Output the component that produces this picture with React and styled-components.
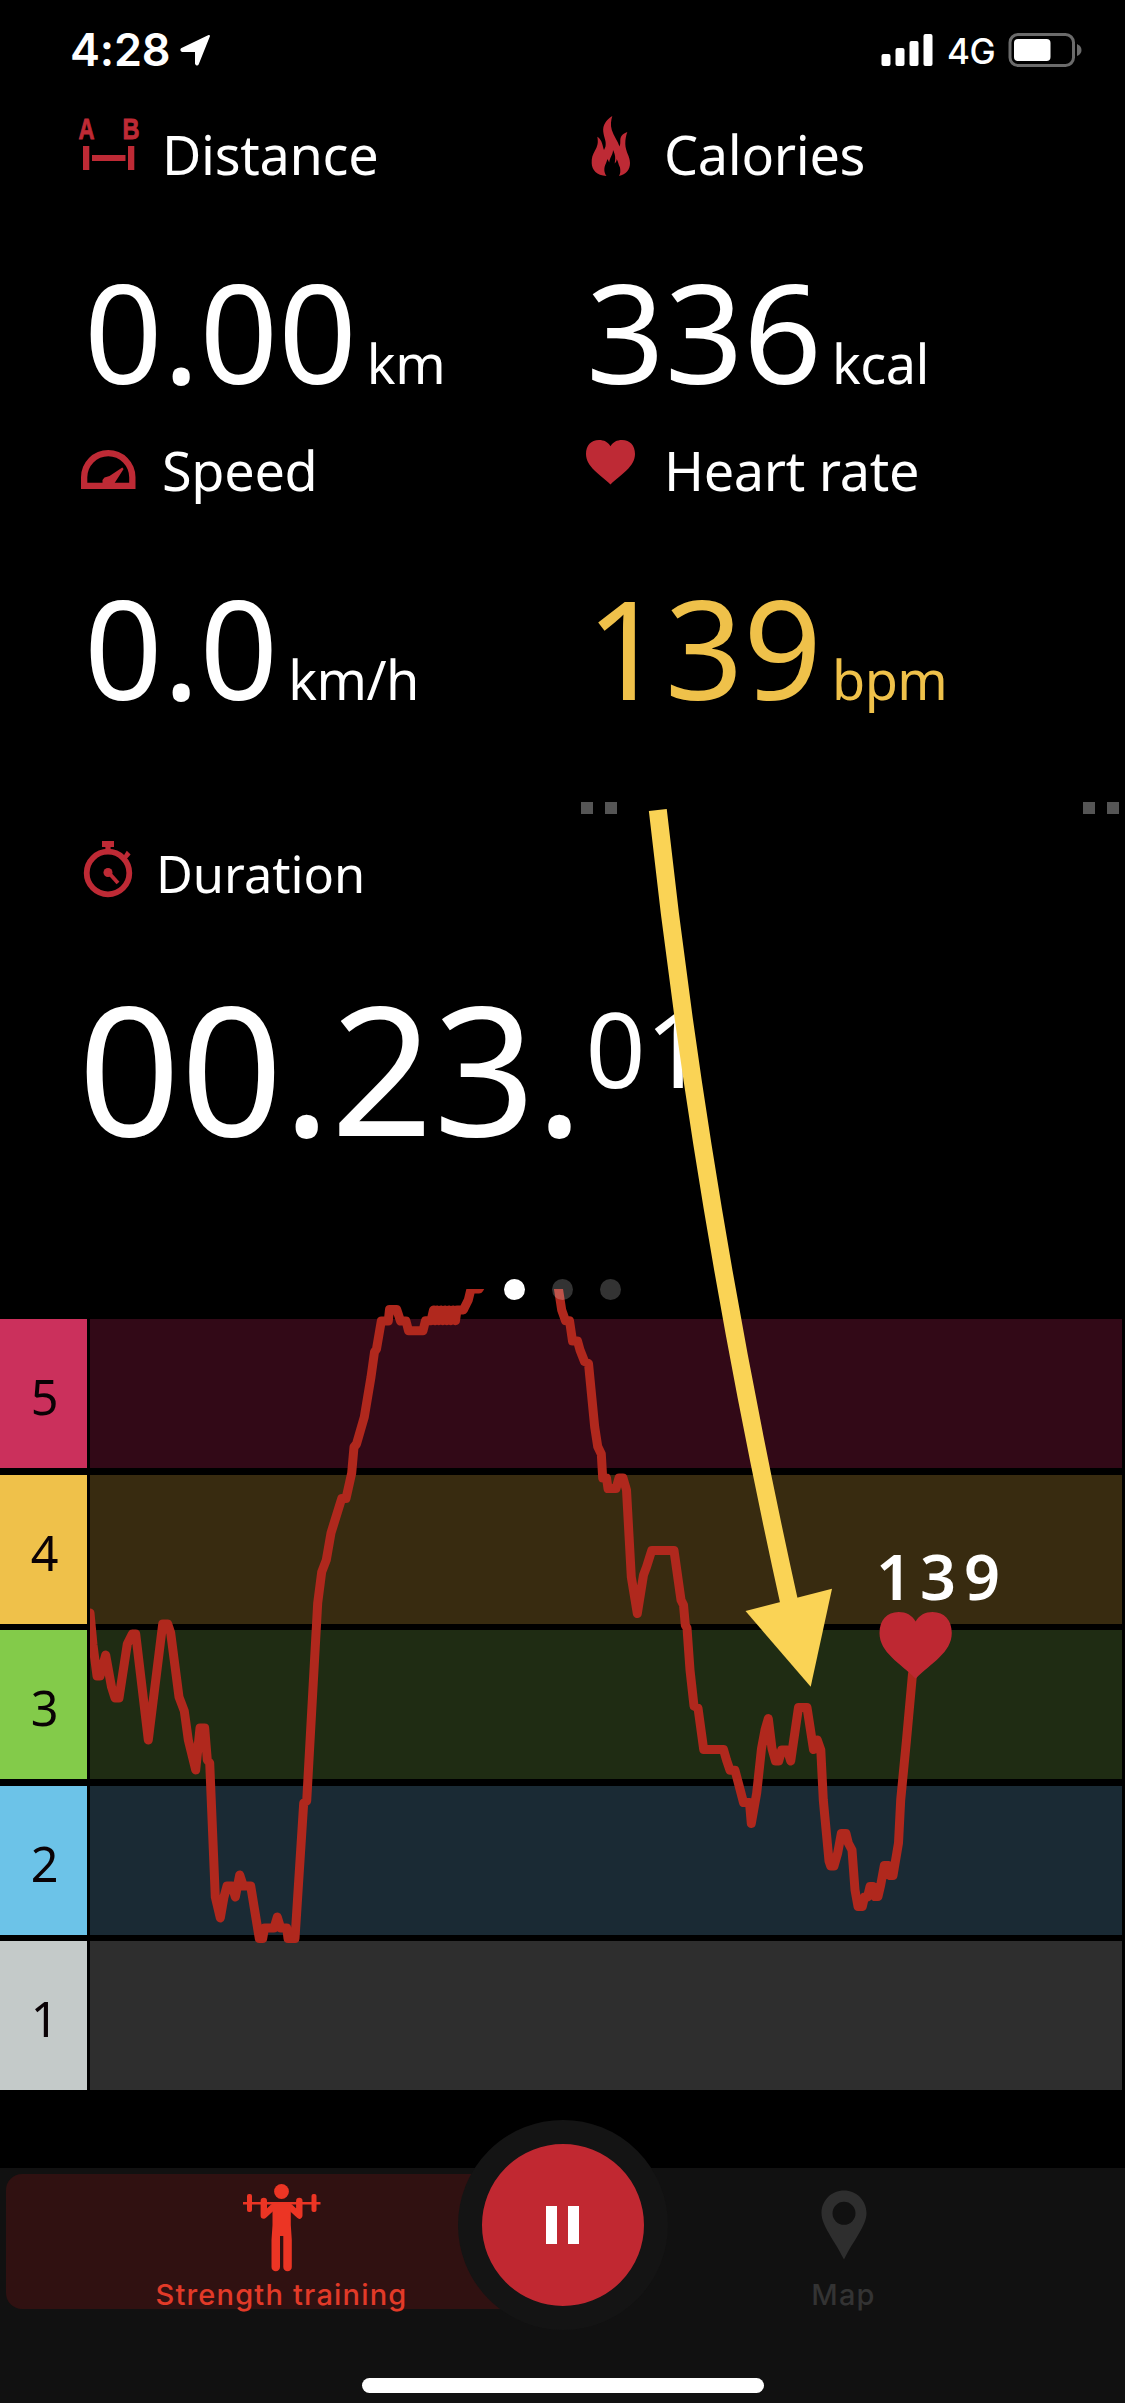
import React from "react";
import styled, { createGlobalStyle } from "styled-components";

const GlobalStyle = createGlobalStyle`
  * {
    box-sizing: border-box;
  }
  body {
    margin: 0;
    background: #000;
  }
`;

const Screen = styled.div`
  position: relative;
  display: flex;
  flex-direction: column;
  width: 1125px;
  height: 2403px;
  overflow: hidden;
  background: #000;
  color: #fff;
  font-family: "Noto Sans", "Open Sans", sans-serif;
`;

const StatusBar = styled.header`
  display: flex;
  justify-content: space-between;
  height: 100px;
  padding: 27px 43px 0 70px;
  font-family: Inter, "Liberation Sans", sans-serif;
`;

const StatusGroup = styled.div`
  display: flex;
  align-items: flex-start;
`;

const Clock = styled.span`
  width: 110px;
  font-size: 45px;
  line-height: 45px;
  font-weight: 600;
  letter-spacing: -0.2px;
`;

const Network = styled.span`
  width: 74px;
  padding: 7px 0 0 14px;
  font-size: 35px;
  line-height: 35px;
  font-weight: 450;
  letter-spacing: -0.5px;
`;

const MetricGrid = styled.section`
  display: grid;
  grid-template-columns: 502px 1fr;
  grid-auto-rows: 316px;
  padding-left: 78px;
`;

const Metric = styled.div`
  padding-top: 16px;
`;

const MetricHead = styled.div`
  display: flex;
  gap: ${({ $gap }) => $gap || 24}px;
  height: 64px;
`;

const IconBox = styled.svg`
  width: 60px;
  height: 64px;
  overflow: visible;
  fill: #be2a35;
`;

const MetricLabel = styled.span`
  padding-top: 11px;
  font-size: ${({ $size }) => $size || 54}px;
  line-height: 1;
  letter-spacing: ${({ $size }) => ($size ? 0 : -0.3)}px;
  white-space: nowrap;
`;

const MetricValue = styled.div`
  display: flex;
  align-items: baseline;
  gap: 10px;
  margin: 82px 0 0 6px;
  font-size: 137.5px;
  line-height: 138px;
  color: ${({ $color }) => $color || "#fff"};
`;

const Unit = styled.span`
  font-size: 54px;
  line-height: 54px;
  letter-spacing: -0.5px;
`;

const Handles = styled.div`
  display: flex;
  justify-content: space-between;
  height: 12px;
  margin: 70px 6px 0 581px;
`;

const HandlePair = styled.div`
  display: flex;
  gap: 12px;
`;

const Handle = styled.span`
  width: 12px;
  height: 12px;
  background: #555;
`;

const Duration = styled.section`
  height: 465px;
  padding: 24px 0 0 78px;
`;

const DurationValue = styled.div`
  display: flex;
  align-items: flex-start;
  margin-top: 75px;
  font-size: 179px;
  line-height: 179px;
`;

const Seconds = styled.span`
  padding: 18px 0 0 2px;
  font-size: 105px;
  line-height: 105px;
`;

const Pager = styled.div`
  position: relative;
  z-index: 1;
  display: flex;
  justify-content: center;
  gap: 27px;
  height: 40px;
`;

const Dot = styled.span`
  width: 21px;
  height: 21px;
  border-radius: 50%;
  background: ${({ $active }) => ($active ? "#fff" : "rgba(255, 255, 255, 0.2)")};
`;

const Chart = styled.section`
  position: relative;
  display: grid;
  grid-template-rows: repeat(4, 155.5px) 149px;
  height: 771px;
`;

const Zone = styled.div`
  display: grid;
  grid-template-columns: 87px 1032px;
  column-gap: 3px;
  height: 149.3px;
`;

const ZoneLabel = styled.span`
  display: flex;
  align-items: center;
  justify-content: center;
  padding: 6px 0 0 2px;
  background: ${({ $color }) => $color};
  color: #0a0205;
  font-size: 48.5px;
  line-height: 1;
`;

const ZoneBand = styled.span`
  background: ${({ $color }) => $color};
`;

const Trace = styled.svg`
  position: absolute;
  left: 90px;
  bottom: 0;
`;

const Reading = styled.span`
  position: absolute;
  left: 876px;
  top: 225px;
  font-size: 63px;
  line-height: 63px;
  font-weight: 570;
  letter-spacing: 8px;
`;

const TabBar = styled.nav`
  position: relative;
  display: grid;
  grid-template-columns: 551px 1fr;
  column-gap: 5px;
  align-items: start;
  height: 235px;
  margin-top: 78px;
  padding: 6px 0 0 6px;
  background: #111;
  font-family: Inter, "Liberation Sans", sans-serif;
`;

const Tab = styled.div`
  display: flex;
  flex-direction: column;
  align-items: center;
  height: 135px;
  padding-top: 8px;
  border-radius: 16px;
  background: ${({ $active }) => ($active ? "#301111" : "transparent")};
  color: ${({ $active }) => ($active ? "#e23a28" : "#333")};

  svg {
    flex-shrink: 0;
  }
`;

const TabLabel = styled.span`
  margin-top: 4px;
  font-size: 29px;
  line-height: 36px;
  font-weight: 450;
  letter-spacing: 1.2px;
`;

const PauseButton = styled.button`
  position: absolute;
  top: -48px;
  left: 457.5px;
  display: flex;
  align-items: center;
  justify-content: center;
  gap: 11px;
  width: 210px;
  height: 210px;
  padding: 0;
  border: 24px solid #141414;
  border-radius: 50%;
  background: #c12831;
`;

const PauseBar = styled.span`
  width: 11px;
  height: 38px;
  background: #fff;
`;

const HomeIndicator = styled.span`
  position: absolute;
  bottom: 10px;
  left: 362px;
  width: 402px;
  height: 15px;
  border-radius: 8px;
  background: #fff;
`;

const Callout = styled.svg`
  position: absolute;
  top: 0;
  left: 0;
  z-index: 2;
  pointer-events: none;
`;

const RED = "#be2a35";
const HEART = "M24.5 6.3C22 2 18 0 13 0C5 0 0 5.5 0 14C0 27 14 34 24.5 44.5C35 34 49 27 49 14C49 5.5 44 0 36 0C31 0 27 2 24.5 6.3Z";

const DistanceIcon = () => (
  <IconBox>
    <g
      fontFamily="Liberation Sans, sans-serif"
      fontWeight="700"
      fontSize="30"
      stroke={RED}
      strokeWidth="0.9"
    >
      <text x="0.5" y="23" textLength="16" lengthAdjust="spacingAndGlyphs">A</text>
      <text x="44.5" y="23" textLength="17" lengthAdjust="spacingAndGlyphs">B</text>
    </g>
    <path d="M5 30h6.3v24H5zM50 30h6.3v24h-6.3zM14 39h33.5v6H14z" />
  </IconBox>
);

const FlameIcon = () => (
  <IconBox>
    <path d="M32.3 0C26 4 22.5 9 23.3 16C24 22 26.500 25 25.500 30.500L24 34C22.500 30 22.500 24 17.300 20.700C18.500 27 17.500 30 15 34.500C12.500 39 11.500 42 11.700 47.300C12 54 16.500 59.500 26.500 60C24 57 23.500 52 26 47.300L27.500 43L29.200 46.500C29.800 41 33 39 33 34C35.500 39 35.600 42 34.700 47.500C36 46 36.700 45 36.700 43C38.500 46 38.200 48.500 40 51.500C40.500 55 40.500 57.500 39 60C46 58.500 50 54 50 47C50 40 45.500 36 45.300 28C45.300 23 46 20 47.300 16C42.500 17.500 40.500 20.500 40.300 24C40.200 27 40.500 28 39.500 30.500C38 25 33.500 20 31.800 14C30.300 9 31 4 32.300 0Z" />
  </IconBox>
);

const SpeedIcon = () => (
  <IconBox>
    <path
      fillRule="evenodd"
      d="M3 57V45.2A27.25 27.25 0 0 1 57.5 45.2V57ZM9.3 50.7H51.2V45.2A20.95 20.95 0 0 0 9.3 45.2Z"
    />
    <path d="M24.5 52V48L26.5 45.5L31.5 44L44.3 35.5L45.6 37L36 52Z" />
  </IconBox>
);

const HeartIcon = () => (
  <IconBox>
    <path transform="translate(6 8)" d={HEART} />
  </IconBox>
);

const StopwatchIcon = () => (
  <IconBox>
    <circle cx="30" cy="35" r="21.3" fill="none" stroke={RED} strokeWidth="5.8" />
    <path d="M24 3h12v6h-3.4v5h-5.2V9H24zM45.8 17.5l3-4.8 3.8 3.8-4 4.5z" />
    <circle cx="30" cy="34.5" r="4.5" />
    <path d="M31 35L40 45" stroke={RED} strokeWidth="3.8" />
  </IconBox>
);

const LiftIcon = () => (
  <svg width="78" height="91" viewBox="243.5 2182 78 91" fill="#ec3524">
    <circle cx="282" cy="2191.5" r="7.4" />
    <path d="M243.5 2202h77.5v2.4h-77.5z" />
    <rect x="247.5" y="2194" width="5" height="18" rx="2" />
    <rect x="312" y="2194" width="5" height="18" rx="2" />
    <path
      d="M264.3 2201V2215.5L273.5 2207H290.5L299.8 2215.5V2201"
      fill="none"
      stroke="#ec3524"
      strokeWidth="6.4"
      strokeLinecap="round"
      strokeLinejoin="round"
    />
    <path d="M273 2204H291.3V2225L292.3 2240V2267A4.1 4.1 0 0 1 283.8 2267V2236H280.5V2267A4.1 4.1 0 0 1 272 2267V2240L273 2225Z" />
  </svg>
);

const PinIcon = () => (
  <svg width="46" height="91" viewBox="820.5 2182 46 91" fill="#2e2e2e">
    <path
      fillRule="evenodd"
      d="M843.5 2190.5C831 2190.5 821 2200.5 821 2213C821 2226 834 2240 843.5 2259.5C853 2240 866 2226 866 2213C866 2200.5 856 2190.5 843.5 2190.5ZM843.5 2201.8A11.5 11.5 0 1 1 843.5 2224.8A11.5 11.5 0 1 1 843.5 2201.8Z"
    />
  </svg>
);

const metrics = [
  { label: "Distance", value: "0.00", unit: "km", icon: DistanceIcon },
  { label: "Calories", value: "336", unit: "kcal", icon: FlameIcon },
  { label: "Speed", value: "0.0", unit: "km/h", icon: SpeedIcon },
  { label: "Heart rate", value: "139", unit: "bpm", icon: HeartIcon, color: "#efc14a" },
];

const zones = [
  { id: 5, color: "#cb305c", band: "#320917" },
  { id: 4, color: "#efc14a", band: "#382b10" },
  { id: 3, color: "#83cb4a", band: "#1f2c13" },
  { id: 2, color: "#6cc3e8", band: "#1a2a34" },
  { id: 1, color: "#c4cac9", band: "#2e2e2e" },
];

const heartTrace = `
  90,1613 93,1645 97,1676 100,1676 105.7,1655 111.5,1687 115,1698 119,1698
  127.3,1644 132.3,1634 135.7,1634 148.3,1740 162.7,1624 167.7,1624
  170.7,1633 179,1697 184.3,1711 188.3,1740 195.7,1770 200,1728
  204.7,1728 207.3,1760 209.7,1763 215.3,1897 220.3,1918 224,1897
  227,1886 232,1886 235.3,1897 239.7,1875 243.3,1886 250.7,1886
  259.3,1938.5 262.7,1938.5 264.5,1928 274,1928 277.3,1917
  280.7,1928 286.7,1928 288,1938.5 295,1938.5 303.7,1803 306.7,1801
  312.7,1693 317.7,1603 321.7,1572 326.3,1560 331,1533 341.7,1498.5
  346,1498.5 351.7,1473 354,1447 356.5,1444 364.3,1417 371,1377
  374.5,1352 376.5,1349 381.3,1321 388.3,1321 389.5,1309.5
  396.7,1309.5 400.5,1321 406,1321 408.5,1330.7 423,1330.7
  425.5,1320.7 431,1320.7 433.5,1310 435,1320.7 437,1310 439,1320.7
  441,1310 443,1320.7 445,1310 447,1320.7 449,1310 451,1320.7 453,1310
  455.5,1320.7 457,1310 463.3,1310 468.3,1300 471,1289 479,1289 490,1270
  548,1260 558,1286 561.7,1310 565.5,1320.7 569.5,1320.7 572.5,1341
  577.5,1341 580,1350 584.5,1361.5 588.5,1363.5 594.7,1427 597.7,1446.5
  601.3,1454 602.7,1478 606.5,1478 608,1488.5 616,1488.5 619,1478
  623,1478 626.5,1490 631.3,1577 637.3,1613.5 643.5,1575 646.5,1567
  651.7,1550.5 674,1550.5 681,1600 683.5,1605 685.3,1625 687,1628
  690,1670 694,1706 698,1708 703.7,1749.5 723.5,1749.5 726.5,1760
  730,1770.3 735,1770.3 743.5,1802.5 749.5,1802.5 751.3,1823.5
  756.7,1793 761.5,1748.5 765,1730 768.3,1718.5 772,1748.5
  775.5,1761 778.7,1761 781.7,1750 787.3,1750 790.7,1761
  798.5,1707.5 807,1707.5 813.5,1749.5 817.3,1740 820.8,1750
  823.3,1800 829,1861 830.7,1866 834,1866 837.7,1853 841.3,1833.5
  846,1833.5 848.3,1843 852,1850 855,1890 858,1906.5 862.3,1906.5
  864.5,1897 867.5,1897 870,1886.5 873,1886.5 875,1896.5 878,1896.5
  880.7,1885 884.3,1865.5 888.3,1865.5 890.3,1875.5 893,1875.5
  898.5,1843 900.7,1800 906.5,1740 912.5,1674`;

export default function App() {
  return (
    <Screen>
      <GlobalStyle />
      <StatusBar>
        <StatusGroup>
          <Clock>4:28</Clock>
          <svg
            width="32"
            height="40"
            viewBox="180 27 32 40"
            fill="#fff"
            stroke="#fff"
            strokeWidth="2"
            strokeLinejoin="round"
          >
            <path d="M209 36L198 63.5Q197 65.5 196 63.5V51H182.5Q180.5 50 182 48.8Z" />
          </svg>
        </StatusGroup>
        <StatusGroup>
          <svg width="52" height="40" viewBox="881 27 52 40" fill="#fff">
            <rect x="881.5" y="54" width="9" height="12" rx="2" />
            <rect x="895.5" y="48" width="9" height="18" rx="2" />
            <rect x="909.5" y="41" width="9" height="25" rx="2" />
            <rect x="923.5" y="34" width="9" height="32" rx="2" />
          </svg>
          <Network>4G</Network>
          <svg width="75" height="42" viewBox="1007 27 75 42">
            <rect
              x="1010"
              y="34.5"
              width="63.5"
              height="31"
              rx="8"
              fill="none"
              stroke="#6b6b6b"
              strokeWidth="3"
            />
            <rect x="1014" y="39" width="36.5" height="22" rx="4" fill="#fff" />
            <path d="M1077 44Q1081.5 46 1081.5 50T1077 56Z" fill="#6b6b6b" />
          </svg>
        </StatusGroup>
      </StatusBar>

      <MetricGrid>
        {metrics.map(({ label, value, unit, icon: Icon, color }) => (
          <Metric key={label}>
            <MetricHead>
              <Icon />
              <MetricLabel>{label}</MetricLabel>
            </MetricHead>
            <MetricValue $color={color}>
              {value}
              <Unit>{unit}</Unit>
            </MetricValue>
          </Metric>
        ))}
      </MetricGrid>

      <Handles>
        <HandlePair>
          <Handle />
          <Handle />
        </HandlePair>
        <HandlePair>
          <Handle />
          <Handle />
        </HandlePair>
      </Handles>

      <Duration>
        <MetricHead $gap={18}>
          <StopwatchIcon />
          <MetricLabel $size={50.5}>Duration</MetricLabel>
        </MetricHead>
        <DurationValue>
          00.23.
          <Seconds>01</Seconds>
        </DurationValue>
      </Duration>

      <Pager>
        <Dot $active />
        <Dot />
        <Dot />
      </Pager>

      <Chart>
        {zones.map((zone) => (
          <Zone key={zone.id}>
            <ZoneLabel $color={zone.color}>{zone.id}</ZoneLabel>
            <ZoneBand $color={zone.band} />
          </Zone>
        ))}
        <Trace width="1032" height="801" viewBox="90 1289 1032 801">
          <polyline
            points={heartTrace}
            fill="none"
            stroke="#b0281d"
            strokeWidth="9"
            strokeLinejoin="round"
            strokeLinecap="round"
          />
          <path transform="translate(879.5 1612) scale(1.475 1.5)" d={HEART} fill="#be2832" />
        </Trace>
        <Reading>139</Reading>
      </Chart>

      <TabBar>
        <Tab $active>
          <LiftIcon />
          <TabLabel>Strength training</TabLabel>
        </Tab>
        <Tab>
          <PinIcon />
          <TabLabel>Map</TabLabel>
        </Tab>
        <PauseButton aria-label="Pause">
          <PauseBar />
          <PauseBar />
        </PauseButton>
        <HomeIndicator />
      </TabBar>

      <Callout width="1125" height="2403">
        <path d="M657.8 810Q701 1205 790 1606" fill="none" stroke="#fad355" strokeWidth="18" />
        <path d="M745.5 1611L832 1588.7L810.7 1686.7Z" fill="#fad355" />
      </Callout>
    </Screen>
  );
}
